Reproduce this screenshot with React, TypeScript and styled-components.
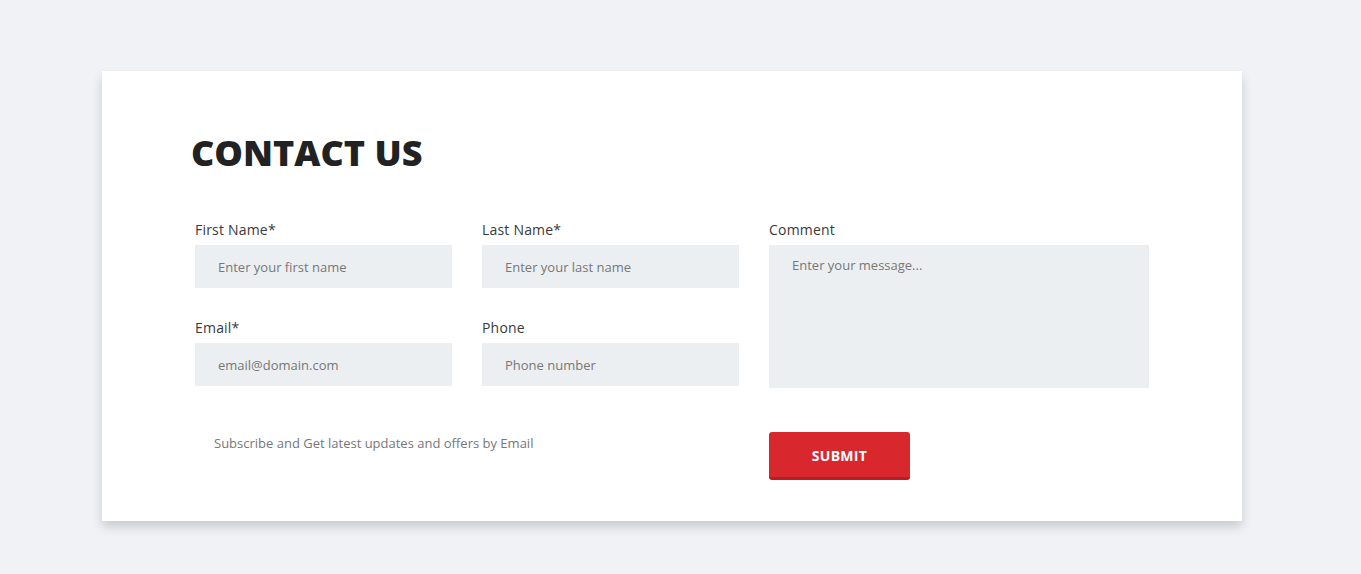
import React from "react";
import styled, { createGlobalStyle } from "styled-components";

const Global = createGlobalStyle`
  html, body { margin: 0; padding: 0; background: #f0f2f5; }
  body { font-family: "Open Sans", "Liberation Sans", sans-serif; }
  * { box-sizing: border-box; }
`;

const Page = styled.div`
  min-height: 574px;
  padding-top: 71px;
  padding-left: 102px;
`;

const Card = styled.div`
  width: 1140px;
  background: #ffffff;
  box-shadow: 0 6px 10px rgba(0, 0, 0, 0.16);
  padding: 60px 93px 41px 93px;
`;

const Title = styled.h1`
  margin: 0 0 45px -4px;
  font-family: "Open Sans", "Liberation Sans", sans-serif;
  font-weight: 800;
  font-size: 36px;
  line-height: 44px;
  letter-spacing: 0px;
  color: #222222;
`;

const Grid = styled.div`
  display: grid;
  grid-template-columns: 257px 257px 380px;
  column-gap: 30px;
  row-gap: 28px;
`;

const Field = styled.div<{ $span?: number }>`
  display: flex;
  flex-direction: column;
  grid-row: ${(p) => (p.$span ? `span ${p.$span}` : "auto")};
`;

const Label = styled.label`
  font-family: "Open Sans", "Liberation Sans", sans-serif;
  font-size: 14px;
  line-height: 20px;
  color: #3a3a3a;
  margin-bottom: 5px;
  letter-spacing: 0.2px;
`;

const Input = styled.input`
  height: 43px;
  border: none;
  outline: none;
  background: #eceff2;
  padding: 0 23px;
  font-family: "Open Sans", "Liberation Sans", sans-serif;
  font-size: 13px;
  color: #333;
  &::placeholder { color: #777777; }
`;

const TextArea = styled.textarea`
  height: 143px;
  border: none;
  outline: none;
  resize: none;
  background: #eceff2;
  padding: 11px 23px;
  font-family: "Open Sans", "Liberation Sans", sans-serif;
  font-size: 13px;
  line-height: 18px;
  color: #333;
  &::placeholder { color: #777777; }
`;

const Bottom = styled.div`
  display: grid;
  grid-template-columns: 544px 380px;
  column-gap: 30px;
  margin-top: 44px;
`;

const Subscribe = styled.div`
  padding-left: 19px;
  padding-top: 2px;
  font-size: 13px;
  line-height: 18px;
  color: #777777;
`;

const Button = styled.button`
  width: 141px;
  height: 48px;
  border: none;
  border-bottom: 3px solid #b81d24;
  border-radius: 3px;
  background: #d9272e;
  color: #ffffff;
  font-family: "Open Sans", "Liberation Sans", sans-serif;
  font-weight: 700;
  font-size: 14px;
  letter-spacing: 0.3px;
  padding-top: 3px;
  cursor: pointer;
`;

export default function App() {
  return (
    <>
      <Global />
      <Page>
        <Card>
          <Title>CONTACT US</Title>
          <Grid>
            <Field>
              <Label>First Name*</Label>
              <Input placeholder="Enter your first name" />
            </Field>
            <Field>
              <Label>Last Name*</Label>
              <Input placeholder="Enter your last name" />
            </Field>
            <Field $span={2}>
              <Label>Comment</Label>
              <TextArea placeholder="Enter your message..." />
            </Field>
            <Field>
              <Label>Email*</Label>
              <Input placeholder="email@domain.com" />
            </Field>
            <Field>
              <Label>Phone</Label>
              <Input placeholder="Phone number" />
            </Field>
          </Grid>
          <Bottom>
            <Subscribe>Subscribe and Get latest updates and offers by Email</Subscribe>
            <div>
              <Button>SUBMIT</Button>
            </div>
          </Bottom>
        </Card>
      </Page>
    </>
  );
}
